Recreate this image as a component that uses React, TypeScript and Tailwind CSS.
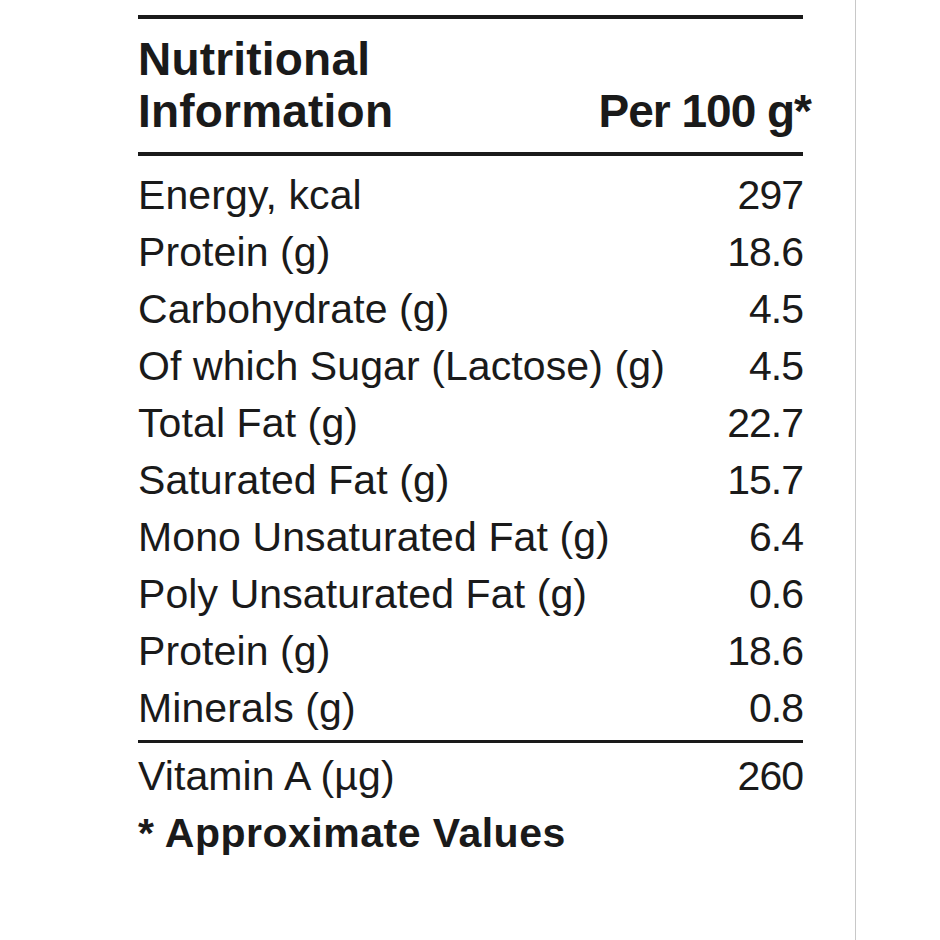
const ROWS: { label: string; value: string }[] = [
  { label: "Energy, kcal", value: "297" },
  { label: "Protein (g)", value: "18.6" },
  { label: "Carbohydrate (g)", value: "4.5" },
  { label: "Of which Sugar (Lactose) (g)", value: "4.5" },
  { label: "Total Fat (g)", value: "22.7" },
  { label: "Saturated Fat (g)", value: "15.7" },
  { label: "Mono Unsaturated Fat (g)", value: "6.4" },
  { label: "Poly Unsaturated Fat (g)", value: "0.6" },
  { label: "Protein (g)", value: "18.6" },
  { label: "Minerals (g)", value: "0.8" },
];

function Row({ label, value }: { label: string; value: string }) {
  return (
    <div className="flex items-baseline justify-between h-[57px] leading-[57px]">
      <span className="tracking-[0.1px]">{label}</span>
      <span className="tracking-[-1px]">{value}</span>
    </div>
  );
}

export default function App() {
  return (
    <div
      className="flex h-[940px] w-[940px] bg-white text-[#1a1a1a]"
      style={{ fontFamily: '"Liberation Sans", Arial, sans-serif' }}
    >
      <div className="w-[856px] border-r border-[#c8c8c8] pl-[138px] pt-[15px]">
        <div className="w-[665px]">
          <div className="h-[4px] bg-[#1a1a1a]" />

          <div className="mt-[14px] flex items-end justify-between text-[46px] font-bold leading-[52px]">
            <div className="tracking-[0.2px]">
              Nutritional
              <br />
              Information
            </div>
            <div className="mr-[-8px] tracking-[-1px]">Per 100 g*</div>
          </div>

          <div className="mt-[15px] h-[4px] bg-[#1a1a1a]" />

          <div className="mt-[11px] text-[41px]">
            {ROWS.map((row, i) => (
              <Row key={i} label={row.label} value={row.value} />
            ))}
          </div>

          <div className="mt-[3px] h-[3px] bg-[#1a1a1a]" />

          <div className="mt-[5px] text-[41px]">
            <Row label="Vitamin A (µg)" value="260" />
          </div>

          <div className="text-[41px] font-bold leading-[57px] tracking-[0.5px]">
            * Approximate Values
          </div>
        </div>
      </div>
    </div>
  );
}
